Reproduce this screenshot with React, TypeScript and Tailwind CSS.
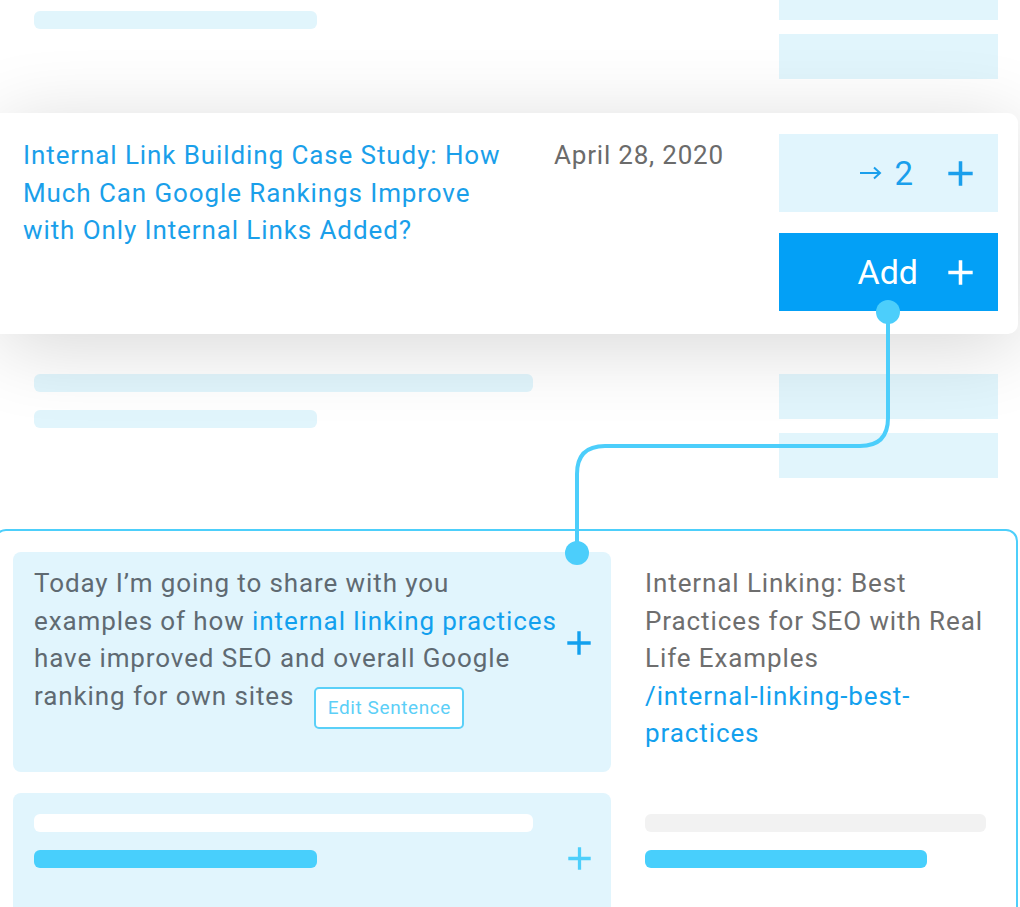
import type { ReactNode } from 'react'

const FONT = { fontFamily: 'Roboto, "Liberation Sans", sans-serif' }

function Plus({ className = '' }: { className?: string }) {
  return (
    <svg viewBox="0 0 24 24" className={className} fill="none" stroke="currentColor" strokeWidth={3.4} strokeLinecap="square">
      <path d="M12 2v20M2 12h20" />
    </svg>
  )
}

function Arrow() {
  return (
    <svg viewBox="0 0 22 14" className="h-[14px] w-[22px]" fill="none" stroke="currentColor" strokeWidth={2}>
      <path d="M0 7h20M14 1.5l6 5.5-6 5.5" />
    </svg>
  )
}

// faded list row that sits above / below the highlighted card
function GhostRow({ tone, className = '' }: { tone: string; className?: string }) {
  return (
    <div className={`flex h-[105px] ${className}`}>
      <div className="flex flex-col pl-[34px]">
        <div className={`h-[18px] w-[499px] rounded-[6px] ${tone}`} />
        <div className={`mt-[18px] h-[18px] w-[283px] rounded-[6px] ${tone}`} />
      </div>
      <div className="ml-auto mr-[22px] flex w-[219px] flex-col">
        <div className={`h-[45px] ${tone}`} />
        <div className={`mt-[14px] h-[45px] ${tone}`} />
      </div>
    </div>
  )
}

function ActionBox({ children, primary }: { children: ReactNode; primary?: boolean }) {
  return (
    <div
      className={`flex h-[78px] items-center justify-end pr-[25px] ${
        primary ? 'bg-[#03a0f6] text-white' : 'bg-[#e1f5fd] text-[#1a9fec]'
      }`}
    >
      {children}
    </div>
  )
}

export default function App() {
  return (
    <div className="relative h-[907px] w-[1020px] overflow-hidden bg-white" style={FONT}>
      <div className="-mt-[25px] flex flex-col">
        <GhostRow tone="bg-[#e1f5fc]" />

        {/* highlighted post */}
        <div className="relative z-10 mr-[2px] mt-[33px] flex h-[221px] rounded-r-[10px] bg-white pr-[20px] pt-[21px] shadow-[0_12px_80px_rgba(0,0,0,0.16)]">
          <div className="w-[527px] pl-[23px] pt-[3px] text-[26px] leading-[37.5px] tracking-[0.9px] text-[#1a9fea]">
            Internal Link Building Case Study: How Much Can Google Rankings Improve with Only Internal Links Added?
          </div>
          <div className="ml-[27px] pt-[3px] text-[26px] leading-[37.5px] tracking-[0.8px] text-[#6b6b6b]">April 28, 2020</div>
          <div className="ml-auto flex w-[219px] flex-col gap-[21px]">
            <ActionBox>
              <Arrow />
              <span className="ml-[12px] text-[33px] leading-none">2</span>
              <Plus className="ml-[35px] h-[25px] w-[25px]" />
            </ActionBox>
            <ActionBox primary>
              <span className="text-[34px] leading-none">Add</span>
              <Plus className="ml-[30px] h-[25px] w-[25px]" />
            </ActionBox>
          </div>
        </div>

        <GhostRow tone="bg-[#e1f5fc]" className="mt-[40px]" />

        {/* sentence suggestion panel */}
        <div className="-ml-[6px] mr-[2px] mt-[50px] h-[420px] rounded-[12px] border-2 border-[#4dcffb] pl-[17px] pt-[21px]">
          <div className="grid grid-cols-[598px_1fr] gap-x-[34px] gap-y-[21px]">
            <div className="flex h-[220px] rounded-[8px] bg-[#e1f5fd] pl-[21px] pr-[20px] pt-[13px]">
              <p className="flex-1 text-[26px] leading-[37.5px] tracking-[0.9px] text-[#5f6a72]">
                Today I’m going to share with you
                <br />
                examples of how <span className="text-[#12a0ee]">internal linking practices</span>
                <br />
                have improved SEO and overall Google
                <br />
                ranking for own sites
                <span className="ml-[20px] mt-[9px] inline-flex h-[42px] w-[150px] items-center justify-center rounded-[5px] border-2 border-[#5ad0f8] bg-white align-top text-[19px] leading-none tracking-[0.6px] text-[#5ccff7]">
                  Edit Sentence
                </span>
              </p>
              <Plus className="mt-[66px] h-[24px] w-[24px] text-[#12a0ee]" />
            </div>
            <div className="pt-[13px] text-[26px] leading-[37.5px] tracking-[0.9px] text-[#6e6e6e]">
              Internal Linking: Best
              <br />
              Practices for SEO with Real
              <br />
              Life Examples
              <br />
              <span className="text-[#12a0ee]">
                /internal-linking-best-
                <br />
                practices
              </span>
            </div>

            <div className="flex h-[150px] rounded-t-[8px] bg-[#e1f5fd] pl-[21px] pr-[20px] pt-[21px]">
              <div className="flex-1">
                <div className="h-[18px] w-[499px] rounded-[6px] bg-white" />
                <div className="mt-[18px] h-[18px] w-[283px] rounded-[6px] bg-[#48cffc]" />
              </div>
              <Plus className="mt-[33px] h-[23px] w-[23px] text-[#4dcffb]" />
            </div>
            <div className="pt-[21px]">
              <div className="h-[18px] w-[341px] rounded-[6px] bg-[#f2f2f2]" />
              <div className="mt-[18px] h-[18px] w-[282px] rounded-[6px] bg-[#48cffc]" />
            </div>
          </div>
        </div>
      </div>

      {/* connector from Add button to sentence */}
      <svg className="pointer-events-none absolute left-0 top-0 z-20" width="1020" height="907" fill="none">
        <path d="M888 312V418Q888 446 860 446H605Q577 446 577 474V553" stroke="#4ccefb" strokeWidth={4} />
        <circle cx="888" cy="312" r="12" fill="#4ccefb" />
        <circle cx="577" cy="553" r="12" fill="#4ccefb" />
      </svg>
    </div>
  )
}
